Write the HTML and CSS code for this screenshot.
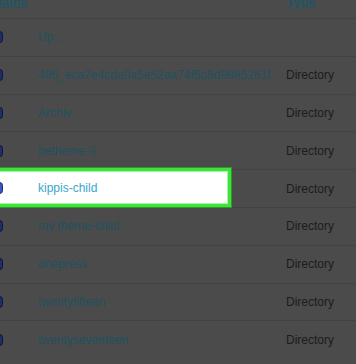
FILE: index.html
```html
<!DOCTYPE html>
<html lang="en">
<head>
    <meta charset="UTF-8">
    <meta name="viewport" content="width=device-width, initial-scale=1.0">
    <title>File Manager</title>
    <link rel="stylesheet" href="styles.css">
</head>
<body>
    <div class="listing">
        <div class="head">
            <a class="sort name-col" href="#">Name</a>
            <a class="sort type-col" href="#">Type</a>
        </div>

        <div class="row">
            <div class="cell-main">
                <svg class="icon" viewBox="0 0 14 12"><rect x="0.5" y="0.5" width="13" height="11" rx="3" /></svg>
                <a class="file" href="#">Up ..</a>
            </div>
            <span class="type"></span>
        </div>
        <div class="row">
            <div class="cell-main">
                <svg class="icon" viewBox="0 0 14 12"><rect x="0.5" y="0.5" width="13" height="11" rx="3" /></svg>
                <a class="file" href="#">496_eca7e4cda0a5e52aa74f5d5d9885261f</a>
            </div>
            <span class="type">Directory</span>
        </div>
        <div class="row">
            <div class="cell-main">
                <svg class="icon" viewBox="0 0 14 12"><rect x="0.5" y="0.5" width="13" height="11" rx="3" /></svg>
                <a class="file" href="#">Archiv</a>
            </div>
            <span class="type">Directory</span>
        </div>
        <div class="row">
            <div class="cell-main">
                <svg class="icon" viewBox="0 0 14 12"><rect x="0.5" y="0.5" width="13" height="11" rx="3" /></svg>
                <a class="file" href="#">betheme-3</a>
            </div>
            <span class="type">Directory</span>
        </div>
        <!-- the step's highlighted folder -->
        <div class="row">
            <div class="cell-main spot">
                <svg class="icon" viewBox="0 0 14 12"><rect x="0.5" y="0.5" width="13" height="11" rx="3" /></svg>
                <a class="file" href="#">kippis-child</a>
            </div>
            <span class="type">Directory</span>
        </div>
        <div class="row">
            <div class="cell-main">
                <svg class="icon" viewBox="0 0 14 12"><rect x="0.5" y="0.5" width="13" height="11" rx="3" /></svg>
                <a class="file" href="#">my theme-child</a>
            </div>
            <span class="type">Directory</span>
        </div>
        <div class="row">
            <div class="cell-main">
                <svg class="icon" viewBox="0 0 14 12"><rect x="0.5" y="0.5" width="13" height="11" rx="3" /></svg>
                <a class="file" href="#">onepress</a>
            </div>
            <span class="type">Directory</span>
        </div>
        <div class="row">
            <div class="cell-main">
                <svg class="icon" viewBox="0 0 14 12"><rect x="0.5" y="0.5" width="13" height="11" rx="3" /></svg>
                <a class="file" href="#">twentyfifteen</a>
            </div>
            <span class="type">Directory</span>
        </div>
        <div class="row">
            <div class="cell-main">
                <svg class="icon" viewBox="0 0 14 12"><rect x="0.5" y="0.5" width="13" height="11" rx="3" /></svg>
                <a class="file" href="#">twentyseventeen</a>
            </div>
            <span class="type">Directory</span>
        </div>
    </div>
</body>
</html>
```

FILE: styles.css
```css
body {
    margin: 0;
    padding: 0;
    background-color: #4b4b4b;
    font-family: "Liberation Sans", Arial, sans-serif;
    font-size: 12px;
    overflow: hidden;
}

.listing {
    width: 376px;
    margin-left: -20px;
    margin-top: -20px;
}

.head {
    display: flex;
    align-items: flex-end;
    height: 38px;
    box-sizing: border-box;
    padding-bottom: 9px;
}

.sort {
    color: #1f5664;
    font-size: 13px;
    font-weight: bold;
    line-height: 15px;
}

.name-col {
    width: 294px;
    padding-left: 12px;
}

.row {
    display: flex;
    align-items: center;
    height: 37.8px;
    box-sizing: border-box;
    border-top: 1px solid #434343;
}

.cell-main {
    display: flex;
    align-items: center;
    flex-shrink: 0;
    width: 251px;
    height: 100%;
    box-sizing: border-box;
    padding-left: 9px;
    white-space: nowrap;
}

.icon {
    flex-shrink: 0;
    width: 14px;
    height: 12px;
    margin-right: 35px;
}

.icon rect {
    fill: #202d6a;
    stroke: #0f1634;
}

.file {
    color: #1f5260;
    text-decoration: none;
}

.type {
    padding-left: 55px;
    color: #1c1c1c;
}

.spot {
    height: 39px;
    margin-top: -2px;
    padding-left: 6px;
    background-color: #fff;
    border: 3px solid #3fe43a;
    box-shadow: 0 0 0 1px #2c9a2a, inset 0 0 0 1px #a8f3a5;
}

.spot .file {
    color: #3aa6cf;
}

.spot .icon rect {
    fill: #3a56c8;
    stroke: #1c2a6a;
}
```
